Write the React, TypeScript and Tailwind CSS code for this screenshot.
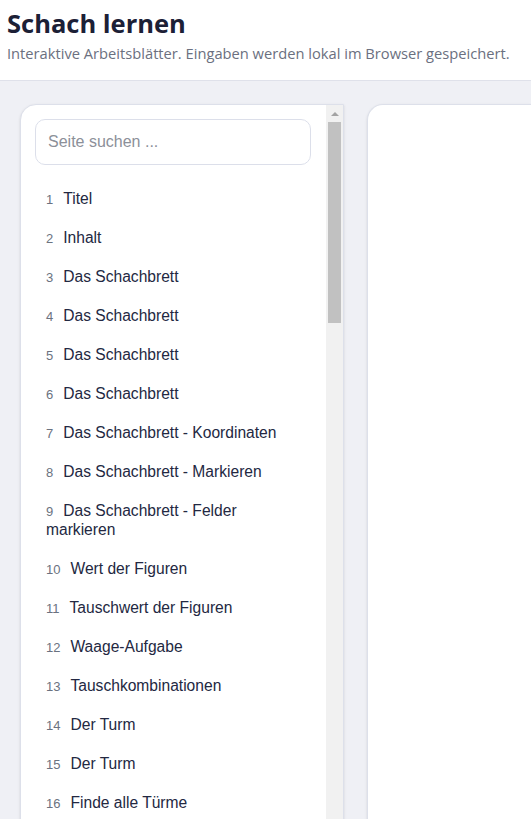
import React from "react";

const pages = [
  "Titel",
  "Inhalt",
  "Das Schachbrett",
  "Das Schachbrett",
  "Das Schachbrett",
  "Das Schachbrett",
  "Das Schachbrett - Koordinaten",
  "Das Schachbrett - Markieren",
  "Das Schachbrett - Felder markieren",
  "Wert der Figuren",
  "Tauschwert der Figuren",
  "Waage-Aufgabe",
  "Tauschkombinationen",
  "Der Turm",
  "Der Turm",
  "Finde alle Türme",
  "Der Läufer",
  "Der Läufer",
];

export default function App() {
  return (
    <div className="min-h-screen bg-[#eff0f5] overflow-hidden">
      <header className="h-[81px] bg-white border-b border-[#dfe1ea] px-[7px] pt-[6px]">
        <h1 className="font-['Open_Sans',sans-serif] text-[25.5px] leading-[34px] font-bold text-[#1c2036]">
          Schach lernen
        </h1>
        <p className="mt-[3px] font-['Open_Sans',sans-serif] text-[14.7px] leading-[20px] text-[#6b7080]">
          Interaktive Arbeitsblätter. Eingaben werden lokal im Browser gespeichert.
        </p>
      </header>

      <main className="flex gap-[23px] pl-5 pt-[23px]">
        {/* Seitenliste */}
        <aside className="w-[324px] shrink-0 h-[760px] flex bg-white border border-[#dde0ea] rounded-tl-2xl overflow-hidden shadow-sm">
          <div className="flex-1 pl-[14px] pr-[15px] pt-[14px]">
            <input
              type="text"
              placeholder="Seite suchen ..."
              className="w-full h-[46px] px-3 rounded-[10px] border border-[#dcdfea] bg-white font-['Liberation_Sans',sans-serif] text-[16px] text-[#1f2540] placeholder:text-[#8c9099] outline-none"
            />
            <ul className="mt-[14px] font-['Liberation_Sans',Arial,sans-serif]">
              {pages.map((title, i) => (
                <li key={i} className="pl-[11px] pr-2 py-[10px] text-[15.6px] leading-[19px] text-[#232842]">
                  <span className="mr-[10px] text-[13px] leading-none text-[#6b7280]">{i + 1}</span>
                  {title}
                </li>
              ))}
            </ul>
          </div>
          {/* Scrollbar */}
          <div className="w-[17px] shrink-0 bg-[#f1f1f1] flex flex-col items-center">
            <div className="h-[17px] flex items-center justify-center">
              <div className="w-0 h-0 border-l-[4px] border-r-[4px] border-b-[4px] border-l-transparent border-r-transparent border-b-[#a3a3a3]" />
            </div>
            <div className="w-[13px] h-[201px] bg-[#c1c1c1]" />
          </div>
        </aside>

        {/* Arbeitsblatt */}
        <section className="flex-1 h-[760px] bg-white border border-[#dde0ea] border-r-0 rounded-tl-2xl shadow-sm" />
      </main>
    </div>
  );
}
